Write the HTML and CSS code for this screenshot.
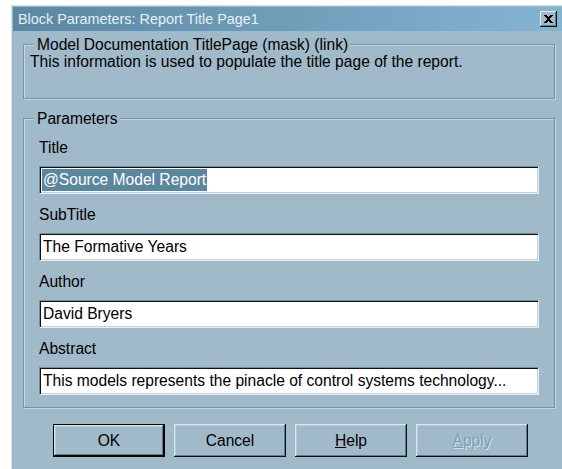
FILE: index.html
```html
<!DOCTYPE html>
<html lang="en">
<head>
<meta charset="utf-8">
<title>Block Parameters: Report Title Page1</title>
<link rel="stylesheet" href="styles.css">
</head>
<body>
<div class="window">
  <div class="titlebar">
    <span class="title">Block Parameters: Report Title Page1</span>
    <button class="close" type="button" aria-label="Close">
      <svg width="9" height="8" viewBox="0 0 9 8" aria-hidden="true">
        <path d="M0 0h3v1h1v1h1V1h1V0h3v1H8v1H7v1H6v2h1v1h1v1h1v1H6V7H5V6H4v1H3v1H0V7h1V6h1V5h1V3H2V2H1V1H0z" fill="#000"/>
      </svg>
    </button>
  </div>

  <div class="client">
    <section class="group group-desc">
      <div class="legend">Model Documentation TitlePage (mask) (link)</div>
      <p class="desc">This information is used to populate the title page of the report.</p>
    </section>

    <section class="group group-params">
      <div class="legend">Parameters</div>
      <div class="param">
        <div class="param-label">Title</div>
        <div class="field"><span class="sel">@Source Model Report</span></div>
      </div>
      <div class="param">
        <div class="param-label">SubTitle</div>
        <div class="field"><span class="val">The Formative Years</span></div>
      </div>
      <div class="param">
        <div class="param-label">Author</div>
        <div class="field"><span class="val">David Bryers</span></div>
      </div>
      <div class="param">
        <div class="param-label">Abstract</div>
        <div class="field"><span class="val">This models represents the pinacle of control systems technology...</span></div>
      </div>
    </section>

    <div class="buttons">
      <button class="btn btn-default" type="button">OK</button>
      <button class="btn" type="button">Cancel</button>
      <button class="btn" type="button"><u>H</u>elp</button>
      <button class="btn" type="button" disabled><u>A</u>pply</button>
    </div>
  </div>
</div>
</body>
</html>
```

FILE: styles.css
```css
html, body {
  margin: 0;
  height: 469px;
  overflow: hidden;
  background: #ffffff;
}

body {
  font-family: "Liberation Sans", Arial, sans-serif;
  font-size: 15.6px;
  color: #000;
}

/* dialog frame */
.window {
  box-sizing: border-box;
  width: 556px;
  height: 470px;
  margin: 5px 0 0 11px;
  padding: 1px 0 0 1px;
  border-top: 1px solid #d3e0e8;
  border-left: 1px solid #d3e0e8;
  background: #a1bac9;
}

.titlebar {
  height: 24px;
  display: flex;
  align-items: center;
  justify-content: space-between;
  padding: 0 10px 0 5px;
  background: linear-gradient(to right, #5a87a3, #84b5d3);
  color: #e8f0f4;
  font-size: 14.4px;
}

.close {
  box-sizing: border-box;
  width: 17px;
  height: 16px;
  padding: 0;
  border: none;
  background: #a1bac9;
  display: flex;
  align-items: center;
  justify-content: center;
  box-shadow:
    inset -1px -1px 0 #0b0f12,
    inset 1px 1px 0 #e0eaf0,
    inset -2px -2px 0 #5d7d90;
}

.close svg {
  display: block;
  margin: 0 1px 1px 0;
}

/* etched group boxes */
.group {
  box-sizing: border-box;
  width: 532px;
  margin-left: 10px;
  border: 1px solid #6f93aa;
  box-shadow: inset 1px 1px 0 #c6d7e1, 1px 1px 0 #c6d7e1;
}

.group-desc {
  margin-top: 13px;
}

.group-params {
  margin-top: 19px;
  padding-bottom: 12px;
}

.legend {
  width: fit-content;
  margin: -8px 0 0 10px;
  padding: 0 2px 0 3px;
  background: #a1bac9;
  line-height: 16px;
}

.desc {
  margin: 0;
  padding: 0 0 27px 6px;
  line-height: 18px;
}

.param {
  margin-top: 12px;
  padding-left: 15px;
}

.param:first-of-type {
  margin-top: 8px;
}

.param-label {
  line-height: 18px;
}

/* sunken edit fields */
.field {
  box-sizing: border-box;
  width: 500px;
  height: 28px;
  margin-top: 9px;
  padding-left: 3px;
  display: flex;
  align-items: center;
  background: #fff;
  border: 1px solid;
  border-color: #6f8ea2 #e6eff4 #e6eff4 #6f8ea2;
  box-shadow: inset 1px 1px 0 #101010, inset -1px -1px 0 #c3d5df;
  line-height: 22px;
  white-space: nowrap;
  overflow: hidden;
}

.sel {
  margin-left: -1px;
  padding: 0 1px;
  background: #5b86a0;
  color: #fff;
}

/* push buttons */
.buttons {
  display: flex;
  gap: 9px;
  margin: 16px 0 0 40px;
}

.btn {
  box-sizing: border-box;
  width: 112px;
  height: 33px;
  padding: 0;
  border: none;
  background: #a1bac9;
  font: inherit;
  color: #000;
  box-shadow:
    inset -1px -1px 0 #0b0f12,
    inset 1px 1px 0 #dbe7ee,
    inset -2px -2px 0 #5d7d90,
    inset 2px 2px 0 #b6cad6;
}

.btn-default {
  box-shadow:
    inset 0 0 0 1px #000,
    inset -2px -2px 0 #000,
    inset 2px 2px 0 #dbe7ee,
    inset -3px -3px 0 #5d7d90,
    inset 3px 3px 0 #b6cad6;
}

.btn:disabled {
  color: #7f9eb2;
  text-shadow: 1px 1px 0 #d3e1e9;
}
```
